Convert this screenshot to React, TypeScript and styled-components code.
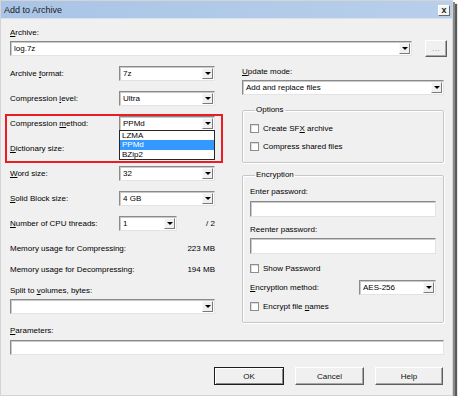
import React from "react";
import styled, { createGlobalStyle } from "styled-components";

const Global = createGlobalStyle`
  html, body { margin: 0; padding: 0; background: #ffffff; }
  body { font-family: "Liberation Sans", Arial, sans-serif; font-size: 8px; color: #000; }
  * { box-sizing: border-box; }
`;

const Window = styled.div`
  width: 453px;
  height: 396px;
  background: #f0f0f0;
  border: 1px solid #d4d4d4;
  box-shadow: 2px 2px 0 0 #8a8a8a, 4px 4px 1px 0 #5a5a5a;
  display: flex;
  flex-direction: column;
`;

const TitleBar = styled.div`
  height: 18px;
  background: linear-gradient(to right, #a9c4e6, #b7cfeb);
  border-bottom: 1px solid #d8e2ee;
  display: flex;
  align-items: center;
  justify-content: space-between;
  padding: 0 2px 0 3px;
  font-size: 9px;
  color: #1b1b1b;
`;

const CloseBtn = styled.div`
  width: 12px;
  height: 11px;
  margin-top: 2px;
  background: #f4f4f4;
  border: 1px solid;
  border-color: #ffffff #6a6a6a #6a6a6a #ffffff;
  display: flex;
  align-items: center;
  justify-content: center;
  font-weight: bold;
  font-size: 9px;
  line-height: 9px;
`;

const Body = styled.div`
  flex: 1;
  padding: 9px 8px 0 9px;
  display: flex;
  flex-direction: column;
`;

const Label = styled.div<{ $mt?: number }>`
  height: 10px;
  line-height: 10px;
  margin-top: ${(p) => p.$mt ?? 0}px;
  white-space: nowrap;
`;

const Key = styled.span`
  text-decoration: underline;
`;

const Sunken = styled.div<{ $w?: number; $h?: number; $mt?: number }>`
  width: ${(p) => (p.$w ? `${p.$w}px` : "100%")};
  height: ${(p) => p.$h ?? 15}px;
  margin-top: ${(p) => p.$mt ?? 0}px;
  background: #ffffff;
  border: 1px solid;
  border-color: #8a8a8a #e3e3e3 #e3e3e3 #8a8a8a;
  box-shadow: inset 1px 1px 0 #c9c9c9;
  display: flex;
  align-items: center;
  position: relative;
  flex-shrink: 0;
`;

const ComboText = styled.div`
  flex: 1;
  padding-left: 3px;
  line-height: 13px;
  white-space: nowrap;
`;

const ArrowBtn = styled.div`
  width: 11px;
  height: 11px;
  margin-right: 1px;
  background: #f0f0f0;
  border: 1px solid;
  border-color: #fafafa #7a7a7a #7a7a7a #fafafa;
  display: flex;
  align-items: center;
  justify-content: center;
`;

const Tri = styled.div`
  width: 0;
  height: 0;
  border-left: 3px solid transparent;
  border-right: 3px solid transparent;
  border-top: 3px solid #000;
`;

const Combo: React.FC<{ w?: number; mt?: number; text?: string; children?: React.ReactNode }> = ({ w, mt, text, children }) => (
  <Sunken $w={w} $mt={mt}>
    <ComboText>{text}</ComboText>
    <ArrowBtn>
      <Tri />
    </ArrowBtn>
    {children}
  </Sunken>
);

const ArchiveRow = styled.div`
  display: flex;
  align-items: center;
  margin-top: 2px;
  gap: 13px;
`;

const Button = styled.div<{ $w: number; $default?: boolean }>`
  width: ${(p) => p.$w}px;
  height: 18px;
  background: #f0f0f0;
  border: 1px solid;
  border-color: ${(p) => (p.$default ? "#1e1e1e" : "#ffffff #5e5e5e #5e5e5e #ffffff")};
  box-shadow: ${(p) =>
    p.$default ? "inset 1px 1px 0 #ffffff, inset -1px -1px 0 #8a8a8a" : "inset -1px -1px 0 #a8a8a8"};
  display: flex;
  align-items: center;
  justify-content: center;
  flex-shrink: 0;
  color: #111;
`;

const DotsBtn = styled(Button)`
  height: 17px;
  color: #8a8a8a;
  letter-spacing: 0.5px;
`;

const Columns = styled.div`
  display: flex;
  margin-top: 9px;
  gap: 27px;
  align-items: flex-start;
`;

const LeftCol = styled.div`
  width: 205px;
  display: flex;
  flex-direction: column;
  position: relative;
`;

const FieldRow = styled.div`
  height: 25px;
  display: flex;
  align-items: flex-start;
  justify-content: space-between;
`;

const RowLabel = styled.div`
  height: 15px;
  line-height: 15px;
  white-space: nowrap;
`;

const ComboWrap = styled.div`
  position: relative;
`;

const ThreadsGroup = styled.div`
  width: 96px;
  display: flex;
  justify-content: space-between;
  align-items: center;
`;

const InfoRow = styled.div<{ $mt?: number }>`
  height: 15px;
  line-height: 15px;
  margin-top: ${(p) => p.$mt ?? 0}px;
  display: flex;
  justify-content: space-between;
  white-space: nowrap;
`;

const DropList = styled.div`
  position: absolute;
  top: 14px;
  left: 0;
  width: 96px;
  height: 30px;
  background: #ffffff;
  border: 1px solid #262626;
  z-index: 2;
  display: flex;
  flex-direction: column;
`;

const DropItem = styled.div<{ $sel?: boolean }>`
  height: 9.3px;
  line-height: 9px;
  padding-left: 2px;
  background: ${(p) => (p.$sel ? "#3399ff" : "transparent")};
  color: ${(p) => (p.$sel ? "#ffffff" : "#000")};
`;

const Highlight = styled.div`
  position: absolute;
  left: -5px;
  top: 48px;
  width: 218px;
  height: 49px;
  border: 2px solid #ea1c24;
  pointer-events: none;
  z-index: 3;
`;

const RightCol = styled.div`
  width: 202px;
  display: flex;
  flex-direction: column;
`;

const Group = styled.fieldset<{ $mt: number; $pb: number }>`
  margin: ${(p) => p.$mt}px 0 0 0;
  padding: 7px 7px ${(p) => p.$pb}px 7px;
  border: 1px solid #c7c7c7;
  box-shadow: 1px 1px 0 #ffffff, inset 1px 1px 0 #ffffff;
  border-radius: 2px;
  display: flex;
  flex-direction: column;
  min-width: 0;
`;

const Legend = styled.legend`
  padding: 0 1px;
  margin-left: 5px;
  height: 10px;
  line-height: 10px;
  font-size: 8px;
`;

const CheckRow = styled.div<{ $mt?: number }>`
  height: 12px;
  margin-top: ${(p) => p.$mt ?? 0}px;
  display: flex;
  align-items: center;
  gap: 4px;
  white-space: nowrap;
`;

const Box = styled.div`
  width: 9px;
  height: 9px;
  background: #ffffff;
  border: 1px solid #8e8e8e;
  box-shadow: inset 1px 1px 0 #dcdcdc;
`;

const MethodRow = styled.div`
  height: 15px;
  margin-top: 6px;
  display: flex;
  align-items: center;
  justify-content: space-between;
  white-space: nowrap;
`;

const ButtonRow = styled.div`
  display: flex;
  justify-content: flex-end;
  gap: 11px;
  margin-top: 12px;
  padding-right: 1px;
`;

const Check: React.FC<{ mt?: number; children: React.ReactNode }> = ({ mt, children }) => (
  <CheckRow $mt={mt}>
    <Box />
    <span>{children}</span>
  </CheckRow>
);

export default function App() {
  return (
    <>
      <Global />
      <Window>
        <TitleBar>
          <span>Add to Archive</span>
          <CloseBtn>x</CloseBtn>
        </TitleBar>
        <Body>
          <Label>
            <Key>A</Key>rchive:
          </Label>
          <ArchiveRow>
            <Combo w={402} text="log.7z" />
            <DotsBtn $w={22}>...</DotsBtn>
          </ArchiveRow>
          <Columns>
            <LeftCol>
              <Highlight />
              <FieldRow>
                <RowLabel>
                  Archive <Key>f</Key>ormat:
                </RowLabel>
                <Combo w={96} text="7z" />
              </FieldRow>
              <FieldRow>
                <RowLabel>
                  Compression <Key>l</Key>evel:
                </RowLabel>
                <Combo w={96} text="Ultra" />
              </FieldRow>
              <FieldRow>
                <RowLabel>
                  Compression <Key>m</Key>ethod:
                </RowLabel>
                <ComboWrap>
                  <Combo w={96} text="PPMd" />
                  <DropList>
                    <DropItem>LZMA</DropItem>
                    <DropItem $sel>PPMd</DropItem>
                    <DropItem>BZip2</DropItem>
                  </DropList>
                </ComboWrap>
              </FieldRow>
              <FieldRow>
                <RowLabel>
                  <Key>D</Key>ictionary size:
                </RowLabel>
                <Combo w={96} text="" />
              </FieldRow>
              <FieldRow>
                <RowLabel>
                  <Key>W</Key>ord size:
                </RowLabel>
                <Combo w={96} text="32" />
              </FieldRow>
              <FieldRow>
                <RowLabel>
                  <Key>S</Key>olid Block size:
                </RowLabel>
                <Combo w={96} text="4 GB" />
              </FieldRow>
              <FieldRow>
                <RowLabel>
                  <Key>N</Key>umber of CPU threads:
                </RowLabel>
                <ThreadsGroup>
                  <Combo w={58} text="1" />
                  <span>/ 2</span>
                </ThreadsGroup>
              </FieldRow>
              <InfoRow>
                <span>Memory usage for Compressing:</span>
                <span>223 MB</span>
              </InfoRow>
              <InfoRow $mt={6}>
                <span>Memory usage for Decompressing:</span>
                <span>194 MB</span>
              </InfoRow>
              <Label $mt={9}>
                Split to <Key>v</Key>olumes, bytes:
              </Label>
              <Combo mt={3} text="" />
            </LeftCol>
            <RightCol>
              <Label $mt={1}>
                <Key>U</Key>pdate mode:
              </Label>
              <Combo mt={3} text="Add and replace files" />
              <Group $mt={10} $pb={10}>
                <Legend>Options</Legend>
                <Check>
                  Create SF<Key>X</Key> archive
                </Check>
                <Check mt={6}>Compress shared files</Check>
              </Group>
              <Group $mt={7} $pb={10}>
                <Legend>Encryption</Legend>
                <Label>Enter password:</Label>
                <Sunken $h={16} $mt={4} />
                <Label $mt={8}>Reenter password:</Label>
                <Sunken $h={16} $mt={3} />
                <Check mt={8}>Show Password</Check>
                <MethodRow>
                  <span>
                    <Key>E</Key>ncryption method:
                  </span>
                  <Combo w={77} text="AES-256" />
                </MethodRow>
                <Check mt={5}>
                  Encrypt file <Key>n</Key>ames
                </Check>
              </Group>
            </RightCol>
          </Columns>
          <Label $mt={3}>
            <Key>P</Key>arameters:
          </Label>
          <Sunken $h={15} $mt={4} $w={434} />
          <ButtonRow>
            <Button $w={70} $default>
              OK
            </Button>
            <Button $w={69}>Cancel</Button>
            <Button $w={68}>Help</Button>
          </ButtonRow>
        </Body>
      </Window>
    </>
  );
}
